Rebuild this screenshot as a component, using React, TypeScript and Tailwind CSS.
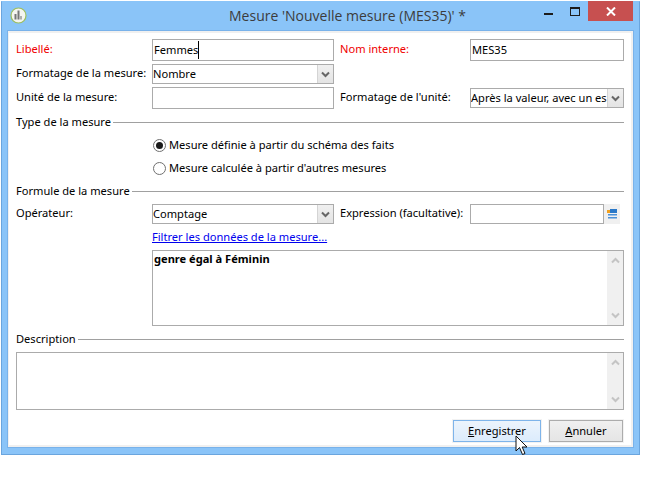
import React from "react";

const Chevron = ({ color = "#666666" }: { color?: string }) => (
  <svg width="9" height="7" viewBox="0 0 9 7" fill="none">
    <path d="M1 1.5 L4.5 5 L8 1.5" stroke={color} strokeWidth="2" />
  </svg>
);

const Label = ({ children, red, w }: { children: React.ReactNode; red?: boolean; w: string }) => (
  <div className={`${w} shrink-0 ${red ? "text-[#f00000]" : "text-black"} whitespace-nowrap -mt-[2px]`}>{children}</div>
);

const Select = ({ value, w }: { value: string; w: string }) => (
  <div className={`${w} h-[20px] border border-[#ababab] bg-white flex items-stretch shrink-0`}>
    <div className="flex-1 min-w-0 overflow-hidden whitespace-nowrap leading-[18px]">{value}</div>
    <div className="w-[16px] shrink-0 bg-gradient-to-b from-[#f0f0f0] to-[#e4e4e4] border-l border-[#d4d4d4] flex items-center justify-center">
      <Chevron />
    </div>
  </div>
);

const Input = ({ children, w }: { children?: React.ReactNode; w: string }) => (
  <div className={`${w} h-[22px] border border-[#ababab] bg-white shrink-0 flex items-center pl-px whitespace-nowrap`}>{children}</div>
);

const Section = ({ title, className }: { title: string; className: string }) => (
  <div className={`flex items-center gap-[2px] h-[16px] ${className}`}>
    <span className="whitespace-nowrap">{title}</span>
    <div className="flex-1 h-px bg-[#a0a0a0]" />
  </div>
);

const Radio = ({ checked, label, className }: { checked?: boolean; label: string; className: string }) => (
  <div className={`flex items-center gap-[3px] pl-[137px] h-[16px] ${className}`}>
    <div className="w-[13px] h-[13px] rounded-full border border-[#707070] bg-white flex items-center justify-center shrink-0">
      {checked && <div className="w-[7px] h-[7px] rounded-full bg-[#1a1a1a]" />}
    </div>
    <span className="whitespace-nowrap">{label}</span>
  </div>
);

const Scrollbar = () => (
  <div className="w-[16px] shrink-0 bg-[#f0f0f0] flex flex-col justify-between items-center py-[6px]">
    <div className="rotate-180"><Chevron color="#c4c4c4" /></div>
    <Chevron color="#c4c4c4" />
  </div>
);

export default function App() {
  return (
    <div className="w-[663px] h-[484px] bg-white relative text-[11.1px] text-black overflow-hidden font-['Noto_Sans','Open_Sans',sans-serif]">
      <div className="ml-px mt-px w-[639px] h-[454px] bg-[#8ac4f8] border border-[#6aa5de] border-t-[#8ac4f8] flex flex-col">
        {/* title bar */}
        <div className="h-[29px] shrink-0 flex items-start relative">
          <svg className="ml-[8px] mt-[5px] shrink-0" width="17" height="17" viewBox="0 0 17 17">
            <circle cx="8.5" cy="8.5" r="7.5" fill="#f5f5f0" stroke="#9dbf5e" strokeWidth="1.2" />
            <path d="M5.5 7 V12.5 M8.5 3.5 V12.5" stroke="#777" strokeWidth="2" fill="none" />
            <path d="M11 9 V12.5" stroke="#999" strokeWidth="1.5" fill="none" />
          </svg>
          <div className="absolute left-[227px] top-[4px] text-[14px] leading-[20px] text-[#3c3c3c] whitespace-nowrap font-['Open_Sans',sans-serif]">
            Mesure 'Nouvelle mesure (MES35)' *
          </div>
          <div className="ml-auto mr-[6px] -mt-px flex items-start">
            <div className="w-[9px] h-[2px] bg-[#1c1c1c] mt-[12px] mr-[17px]" />
            <div className="w-[10px] h-[9px] border border-[#1c1c1c] border-t-2 mt-[6px] mr-[8px]" />
            <div className="w-[45px] h-[20px] bg-[#c75050] flex items-center justify-center">
              <svg width="10" height="9" viewBox="0 0 10 9">
                <path d="M1 0.5 L9 8.5 M9 0.5 L1 8.5" stroke="#fff" strokeWidth="2" />
              </svg>
            </div>
          </div>
        </div>
        {/* body */}
        <div className="mx-[6px] w-[625px] h-[416px] shrink-0 bg-white border-2 border-[#f0f0f0] border-l px-[7px] pt-[6px] outline outline-[#79b2ea]">
          <div className="flex items-center h-[22px]">
            <Label red w="w-[136px]">Libellé:</Label>
            <Input w="w-[182px]">
              <span>Femmes</span>
              <span className="w-px h-[18px] bg-black" />
            </Input>
            <div className="w-[6px]" />
            <Label red w="w-[130px]">Nom interne:</Label>
            <Input w="w-[154px]">MES35</Input>
          </div>
          <div className="flex items-center h-[20px] mt-[3px]">
            <Label w="w-[136px]">Formatage de la mesure:</Label>
            <Select value="Nombre" w="w-[182px]" />
          </div>
          <div className="flex items-center h-[22px] mt-[3px]">
            <Label w="w-[136px]">Unité de la mesure:</Label>
            <Input w="w-[182px]" />
            <div className="w-[6px]" />
            <Label w="w-[130px]">Formatage de l'unité:</Label>
            <Select value="Après la valeur, avec un espace" w="w-[154px]" />
          </div>
          <Section title="Type de la mesure" className="mt-[5px]" />
          <Radio checked label="Mesure définie à partir du schéma des faits" className="mt-[7px]" />
          <Radio label="Mesure calculée à partir d'autres mesures" className="mt-[7px]" />
          <Section title="Formule de la mesure" className="mt-[7px]" />
          <div className="flex items-center h-[20px] mt-[5px]">
            <Label w="w-[136px]">Opérateur:</Label>
            <Select value="Comptage" w="w-[182px]" />
            <div className="w-[6px]" />
            <Label w="w-[130px]">Expression (facultative):</Label>
            <div className="flex shrink-0">
              <div className="w-[134px] h-[20px] border border-[#ababab] bg-white" />
              <div className="w-[16px] h-[20px] bg-[#f0f0f0] flex items-center justify-center">
                <svg width="11" height="10" viewBox="0 0 11 10">
                  <rect x="0" y="1" width="3" height="3" fill="#f0a020" />
                  <rect x="3" y="0" width="7" height="4" fill="#2a78c8" />
                  <rect x="1" y="5" width="9" height="1.5" fill="#4a90d8" />
                  <rect x="1" y="8" width="9" height="1.5" fill="#4a90d8" />
                </svg>
              </div>
            </div>
          </div>
          <div className="pl-[136px] h-[16px] mt-[5px] leading-[16px] text-[#0000ee] underline whitespace-nowrap">
            Filtrer les données de la mesure...
          </div>
          <div className="ml-[136px] w-[472px] h-[76px] mt-[5px] border border-[#ababab] bg-white flex">
            <div className="flex-1 font-bold pl-[1px] leading-[16px]">genre égal à Féminin</div>
            <Scrollbar />
          </div>
          <Section title="Description" className="mt-[5px]" />
          <div className="w-[608px] h-[58px] mt-[5px] border border-[#ababab] bg-white flex">
            <div className="flex-1" />
            <Scrollbar />
          </div>
          <div className="flex justify-end gap-[8px] w-[607px] mt-[10px]">
            <button className="w-[88px] h-[22px] border border-[#7eb4ea] bg-gradient-to-b from-[#ecf4fc] to-[#dcecfc] outline outline-[#f2f2f2] flex items-center justify-center">
              <span><span className="underline">E</span>nregistrer</span>
            </button>
            <button className="w-[74px] h-[22px] border border-[#acacac] bg-gradient-to-b from-[#f0f0f0] to-[#e5e5e5] outline outline-[#f2f2f2] flex items-center justify-center">
              <span><span className="underline">A</span>nnuler</span>
            </button>
          </div>
        </div>
      </div>
      <svg className="absolute left-[515px] top-[435px]" width="14" height="21" viewBox="0 0 14 21">
        <path d="M1 1 V16 L4.5 12.5 L7.5 19.5 L10 18.5 L7.2 12 H12 Z" fill="#fff" stroke="#111" strokeWidth="1" />
      </svg>
    </div>
  );
}
